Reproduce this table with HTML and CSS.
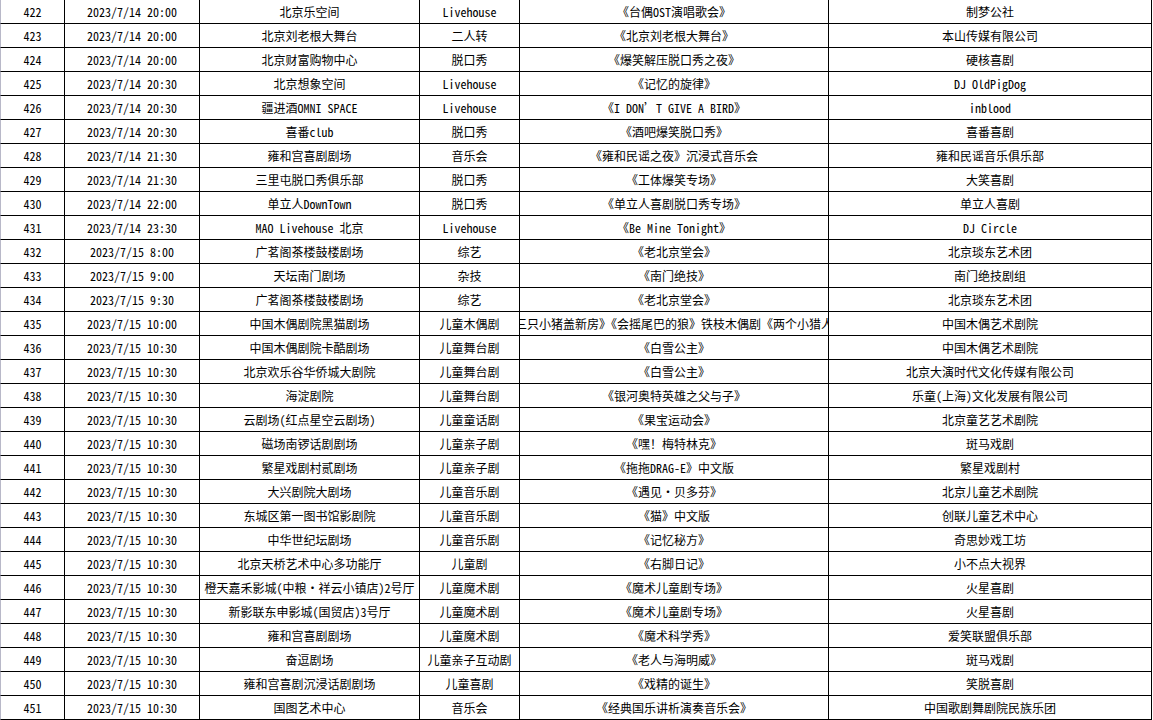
FILE: index.html
```html
<!DOCTYPE html>
<html lang="zh-CN">
<head>
<meta charset="utf-8">
<title>演出列表</title>
<link rel="stylesheet" href="styles.css">
</head>
<body>
<div class="sheet">
<div class="row"><div class="c n">422</div><div class="c">2023/7/14 20:00</div><div class="c">北京乐空间</div><div class="c">Livehouse</div><div class="c">《台偶OST演唱歌会》</div><div class="c">制梦公社</div></div>
<div class="row"><div class="c n">423</div><div class="c">2023/7/14 20:00</div><div class="c">北京刘老根大舞台</div><div class="c">二人转</div><div class="c">《北京刘老根大舞台》</div><div class="c">本山传媒有限公司</div></div>
<div class="row"><div class="c n">424</div><div class="c">2023/7/14 20:00</div><div class="c">北京财富购物中心</div><div class="c">脱口秀</div><div class="c">《爆笑解压脱口秀之夜》</div><div class="c">硬核喜剧</div></div>
<div class="row"><div class="c n">425</div><div class="c">2023/7/14 20:30</div><div class="c">北京想象空间</div><div class="c">Livehouse</div><div class="c">《记忆的旋律》</div><div class="c">DJ OldPigDog</div></div>
<div class="row"><div class="c n">426</div><div class="c">2023/7/14 20:30</div><div class="c">疆进酒OMNI SPACE</div><div class="c">Livehouse</div><div class="c">《I DON’T GIVE A BIRD》</div><div class="c">inblood</div></div>
<div class="row"><div class="c n">427</div><div class="c">2023/7/14 20:30</div><div class="c">喜番club</div><div class="c">脱口秀</div><div class="c">《酒吧爆笑脱口秀》</div><div class="c">喜番喜剧</div></div>
<div class="row"><div class="c n">428</div><div class="c">2023/7/14 21:30</div><div class="c">雍和宫喜剧剧场</div><div class="c">音乐会</div><div class="c">《雍和民谣之夜》沉浸式音乐会</div><div class="c">雍和民谣音乐俱乐部</div></div>
<div class="row"><div class="c n">429</div><div class="c">2023/7/14 21:30</div><div class="c">三里屯脱口秀俱乐部</div><div class="c">脱口秀</div><div class="c">《工体爆笑专场》</div><div class="c">大笑喜剧</div></div>
<div class="row"><div class="c n">430</div><div class="c">2023/7/14 22:00</div><div class="c">单立人DownTown</div><div class="c">脱口秀</div><div class="c">《单立人喜剧脱口秀专场》</div><div class="c">单立人喜剧</div></div>
<div class="row"><div class="c n">431</div><div class="c">2023/7/14 23:30</div><div class="c">MAO Livehouse 北京</div><div class="c">Livehouse</div><div class="c">《Be Mine Tonight》</div><div class="c">DJ Circle</div></div>
<div class="row"><div class="c n">432</div><div class="c">2023/7/15 8:00</div><div class="c">广茗阁茶楼鼓楼剧场</div><div class="c">综艺</div><div class="c">《老北京堂会》</div><div class="c">北京琰东艺术团</div></div>
<div class="row"><div class="c n">433</div><div class="c">2023/7/15 9:00</div><div class="c">天坛南门剧场</div><div class="c">杂技</div><div class="c">《南门绝技》</div><div class="c">南门绝技剧组</div></div>
<div class="row"><div class="c n">434</div><div class="c">2023/7/15 9:30</div><div class="c">广茗阁茶楼鼓楼剧场</div><div class="c">综艺</div><div class="c">《老北京堂会》</div><div class="c">北京琰东艺术团</div></div>
<div class="row"><div class="c n">435</div><div class="c">2023/7/15 10:00</div><div class="c">中国木偶剧院黑猫剧场</div><div class="c">儿童木偶剧</div><div class="c">《三只小猪盖新房》《会摇尾巴的狼》铁枝木偶剧《两个小猎人》</div><div class="c">中国木偶艺术剧院</div></div>
<div class="row"><div class="c n">436</div><div class="c">2023/7/15 10:30</div><div class="c">中国木偶剧院卡酷剧场</div><div class="c">儿童舞台剧</div><div class="c">《白雪公主》</div><div class="c">中国木偶艺术剧院</div></div>
<div class="row"><div class="c n">437</div><div class="c">2023/7/15 10:30</div><div class="c">北京欢乐谷华侨城大剧院</div><div class="c">儿童舞台剧</div><div class="c">《白雪公主》</div><div class="c">北京大演时代文化传媒有限公司</div></div>
<div class="row"><div class="c n">438</div><div class="c">2023/7/15 10:30</div><div class="c">海淀剧院</div><div class="c">儿童舞台剧</div><div class="c">《银河奥特英雄之父与子》</div><div class="c">乐童(上海)文化发展有限公司</div></div>
<div class="row"><div class="c n">439</div><div class="c">2023/7/15 10:30</div><div class="c">云剧场(红点星空云剧场)</div><div class="c">儿童童话剧</div><div class="c">《果宝运动会》</div><div class="c">北京童艺艺术剧院</div></div>
<div class="row"><div class="c n">440</div><div class="c">2023/7/15 10:30</div><div class="c">磁场南锣话剧剧场</div><div class="c">儿童亲子剧</div><div class="c">《嘿！梅特林克》</div><div class="c">斑马戏剧</div></div>
<div class="row"><div class="c n">441</div><div class="c">2023/7/15 10:30</div><div class="c">繁星戏剧村贰剧场</div><div class="c">儿童亲子剧</div><div class="c">《拖拖DRAG-E》中文版</div><div class="c">繁星戏剧村</div></div>
<div class="row"><div class="c n">442</div><div class="c">2023/7/15 10:30</div><div class="c">大兴剧院大剧场</div><div class="c">儿童音乐剧</div><div class="c">《遇见·贝多芬》</div><div class="c">北京儿童艺术剧院</div></div>
<div class="row"><div class="c n">443</div><div class="c">2023/7/15 10:30</div><div class="c">东城区第一图书馆影剧院</div><div class="c">儿童音乐剧</div><div class="c">《猫》中文版</div><div class="c">创联儿童艺术中心</div></div>
<div class="row"><div class="c n">444</div><div class="c">2023/7/15 10:30</div><div class="c">中华世纪坛剧场</div><div class="c">儿童音乐剧</div><div class="c">《记忆秘方》</div><div class="c">奇思妙戏工坊</div></div>
<div class="row"><div class="c n">445</div><div class="c">2023/7/15 10:30</div><div class="c">北京天桥艺术中心多功能厅</div><div class="c">儿童剧</div><div class="c">《右脚日记》</div><div class="c">小不点大视界</div></div>
<div class="row"><div class="c n">446</div><div class="c">2023/7/15 10:30</div><div class="c">橙天嘉禾影城(中粮·祥云小镇店)2号厅</div><div class="c">儿童魔术剧</div><div class="c">《魔术儿童剧专场》</div><div class="c">火星喜剧</div></div>
<div class="row"><div class="c n">447</div><div class="c">2023/7/15 10:30</div><div class="c">新影联东申影城(国贸店)3号厅</div><div class="c">儿童魔术剧</div><div class="c">《魔术儿童剧专场》</div><div class="c">火星喜剧</div></div>
<div class="row"><div class="c n">448</div><div class="c">2023/7/15 10:30</div><div class="c">雍和宫喜剧剧场</div><div class="c">儿童魔术剧</div><div class="c">《魔术科学秀》</div><div class="c">爱笑联盟俱乐部</div></div>
<div class="row"><div class="c n">449</div><div class="c">2023/7/15 10:30</div><div class="c">奋逗剧场</div><div class="c">儿童亲子互动剧</div><div class="c">《老人与海明威》</div><div class="c">斑马戏剧</div></div>
<div class="row"><div class="c n">450</div><div class="c">2023/7/15 10:30</div><div class="c">雍和宫喜剧沉浸话剧剧场</div><div class="c">儿童喜剧</div><div class="c">《戏精的诞生》</div><div class="c">笑脱喜剧</div></div>
<div class="row"><div class="c n">451</div><div class="c">2023/7/15 10:30</div><div class="c">国图艺术中心</div><div class="c">音乐会</div><div class="c">《经典国乐讲析演奏音乐会》</div><div class="c">中国歌剧舞剧院民族乐团</div></div>
</div>
</body>
</html>
```
FILE: styles.css
```css
html, body {
  margin: 0;
  padding: 0;
  background: #ffffff;
}

.sheet {
  width: 1152px;
  font-family: "Noto Sans Mono CJK SC", "Noto Sans CJK SC", sans-serif;
  font-size: 12px;
  color: #000000;
}

.row {
  display: grid;
  grid-template-columns: 65px 135px 220px 100px 309px 323px;
  height: 24px;
}

.c {
  box-sizing: border-box;
  display: flex;
  align-items: center;
  justify-content: center;
  overflow: hidden;
  white-space: nowrap;
  border-right: 1px solid #000000;
  border-bottom: 1px solid #000000;
  line-height: 23px;
  padding-bottom: 1px;
}

.n {
  border-left: 1px solid #b8b8c8;
}
```
